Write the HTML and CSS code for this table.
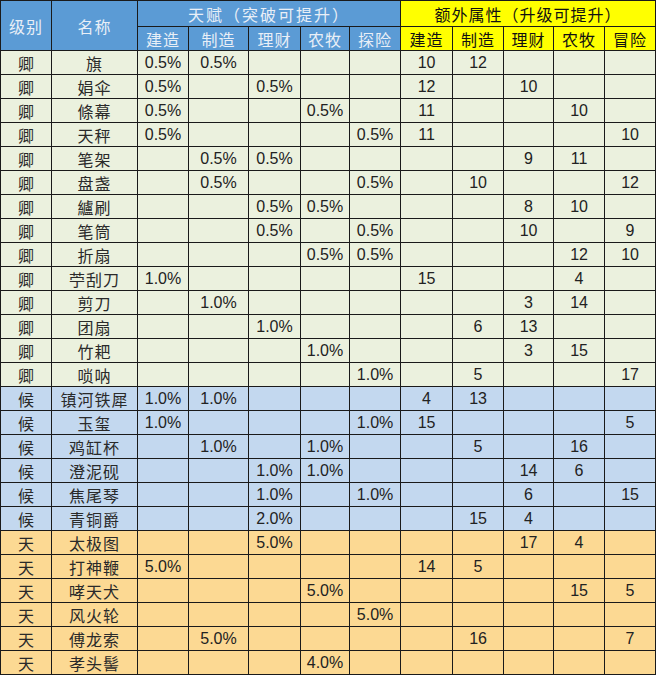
FILE: index.html
```html
<!DOCTYPE html>
<html lang="zh">
<head>
<meta charset="utf-8">
<title>法宝属性表</title>
<link rel="stylesheet" href="styles.css">
</head>
<body>
<table class="sheet">
  <colgroup>
    <col class="c-lv"><col class="c-name">
    <col class="c-a1"><col class="c-a2"><col class="c-a3"><col class="c-a4"><col class="c-a5">
    <col class="c-b1"><col class="c-b2"><col class="c-b3"><col class="c-b4"><col class="c-b5">
  </colgroup>
  <thead>
    <tr class="h1">
      <th class="blue" rowspan="2">级别</th>
      <th class="blue" rowspan="2">名称</th>
      <th class="blue wide" colspan="5">天赋（突破可提升）</th>
      <th class="yellow" colspan="5">额外属性（升级可提升）</th>
    </tr>
    <tr class="h2">
      <th class="blue">建造</th><th class="blue">制造</th><th class="blue">理财</th><th class="blue">农牧</th><th class="blue">探险</th>
      <th class="yellow">建造</th><th class="yellow">制造</th><th class="yellow">理财</th><th class="yellow">农牧</th><th class="yellow">冒险</th>
    </tr>
  </thead>
  <tbody>
    <tr class="qing"><td class="lv">卿</td><td class="nm">旗</td><td>0.5%</td><td>0.5%</td><td></td><td></td><td></td><td>10</td><td>12</td><td></td><td></td><td></td></tr>
    <tr class="qing"><td class="lv">卿</td><td class="nm">娟伞</td><td>0.5%</td><td></td><td>0.5%</td><td></td><td></td><td>12</td><td></td><td>10</td><td></td><td></td></tr>
    <tr class="qing"><td class="lv">卿</td><td class="nm">條幕</td><td>0.5%</td><td></td><td></td><td>0.5%</td><td></td><td>11</td><td></td><td></td><td>10</td><td></td></tr>
    <tr class="qing"><td class="lv">卿</td><td class="nm">天秤</td><td>0.5%</td><td></td><td></td><td></td><td>0.5%</td><td>11</td><td></td><td></td><td></td><td>10</td></tr>
    <tr class="qing"><td class="lv">卿</td><td class="nm">笔架</td><td></td><td>0.5%</td><td>0.5%</td><td></td><td></td><td></td><td></td><td>9</td><td>11</td><td></td></tr>
    <tr class="qing"><td class="lv">卿</td><td class="nm">盘盏</td><td></td><td>0.5%</td><td></td><td></td><td>0.5%</td><td></td><td>10</td><td></td><td></td><td>12</td></tr>
    <tr class="qing"><td class="lv">卿</td><td class="nm">纑刷</td><td></td><td></td><td>0.5%</td><td>0.5%</td><td></td><td></td><td></td><td>8</td><td>10</td><td></td></tr>
    <tr class="qing"><td class="lv">卿</td><td class="nm">笔筒</td><td></td><td></td><td>0.5%</td><td></td><td>0.5%</td><td></td><td></td><td>10</td><td></td><td>9</td></tr>
    <tr class="qing"><td class="lv">卿</td><td class="nm">折扇</td><td></td><td></td><td></td><td>0.5%</td><td>0.5%</td><td></td><td></td><td></td><td>12</td><td>10</td></tr>
    <tr class="qing"><td class="lv">卿</td><td class="nm">苧刮刀</td><td>1.0%</td><td></td><td></td><td></td><td></td><td>15</td><td></td><td></td><td>4</td><td></td></tr>
    <tr class="qing"><td class="lv">卿</td><td class="nm">剪刀</td><td></td><td>1.0%</td><td></td><td></td><td></td><td></td><td></td><td>3</td><td>14</td><td></td></tr>
    <tr class="qing"><td class="lv">卿</td><td class="nm">团扇</td><td></td><td></td><td>1.0%</td><td></td><td></td><td></td><td>6</td><td>13</td><td></td><td></td></tr>
    <tr class="qing"><td class="lv">卿</td><td class="nm">竹耙</td><td></td><td></td><td></td><td>1.0%</td><td></td><td></td><td></td><td>3</td><td>15</td><td></td></tr>
    <tr class="qing"><td class="lv">卿</td><td class="nm">唢呐</td><td></td><td></td><td></td><td></td><td>1.0%</td><td></td><td>5</td><td></td><td></td><td>17</td></tr>
    <tr class="hou"><td class="lv">候</td><td class="nm">镇河铁犀</td><td>1.0%</td><td>1.0%</td><td></td><td></td><td></td><td>4</td><td>13</td><td></td><td></td><td></td></tr>
    <tr class="hou"><td class="lv">候</td><td class="nm">玉玺</td><td>1.0%</td><td></td><td></td><td></td><td>1.0%</td><td>15</td><td></td><td></td><td></td><td>5</td></tr>
    <tr class="hou"><td class="lv">候</td><td class="nm">鸡缸杯</td><td></td><td>1.0%</td><td></td><td>1.0%</td><td></td><td></td><td>5</td><td></td><td>16</td><td></td></tr>
    <tr class="hou"><td class="lv">候</td><td class="nm">澄泥砚</td><td></td><td></td><td>1.0%</td><td>1.0%</td><td></td><td></td><td></td><td>14</td><td>6</td><td></td></tr>
    <tr class="hou"><td class="lv">候</td><td class="nm">焦尾琴</td><td></td><td></td><td>1.0%</td><td></td><td>1.0%</td><td></td><td></td><td>6</td><td></td><td>15</td></tr>
    <tr class="hou"><td class="lv">候</td><td class="nm">青铜爵</td><td></td><td></td><td>2.0%</td><td></td><td></td><td></td><td>15</td><td>4</td><td></td><td></td></tr>
    <tr class="tian"><td class="lv">天</td><td class="nm">太极图</td><td></td><td></td><td>5.0%</td><td></td><td></td><td></td><td></td><td>17</td><td>4</td><td></td></tr>
    <tr class="tian"><td class="lv">天</td><td class="nm">打神鞭</td><td>5.0%</td><td></td><td></td><td></td><td></td><td>14</td><td>5</td><td></td><td></td><td></td></tr>
    <tr class="tian"><td class="lv">天</td><td class="nm">哮天犬</td><td></td><td></td><td></td><td>5.0%</td><td></td><td></td><td></td><td></td><td>15</td><td>5</td></tr>
    <tr class="tian"><td class="lv">天</td><td class="nm">风火轮</td><td></td><td></td><td></td><td></td><td>5.0%</td><td></td><td></td><td></td><td></td><td></td></tr>
    <tr class="tian"><td class="lv">天</td><td class="nm">傅龙索</td><td></td><td>5.0%</td><td></td><td></td><td></td><td></td><td>16</td><td></td><td></td><td>7</td></tr>
    <tr class="tian"><td class="lv">天</td><td class="nm">孝头髻</td><td></td><td></td><td></td><td>4.0%</td><td></td><td></td><td></td><td></td><td></td><td></td></tr>
  </tbody>
</table>
</body>
</html>
```

FILE: styles.css
```css
html, body {
  margin: 0;
  padding: 0;
  background: #ffffff;
}

.sheet {
  border-collapse: collapse;
  table-layout: fixed;
  width: 655px;
  font-family: "Liberation Sans", "Noto Sans CJK SC", sans-serif;
  font-size: 16px;
  line-height: 18px;
  color: #222222;
}

.c-lv { width: 51px; }
.c-name { width: 86px; }
.c-a1 { width: 51px; }
.c-a2 { width: 60px; }
.c-a3 { width: 52px; }
.c-a4 { width: 49px; }
.c-a5 { width: 51px; }
.c-b1 { width: 52px; }
.c-b2 { width: 51px; }
.c-b3 { width: 50px; }
.c-b4 { width: 51px; }
.c-b5 { width: 51px; }

.sheet th,
.sheet td {
  border: 1px solid #1a1a1a;
  padding: 0;
  text-align: center;
  vertical-align: middle;
  white-space: nowrap;
  overflow: hidden;
}

.sheet th {
  font-family: "Noto Sans CJK SC", sans-serif;
  font-weight: 400;
  font-size: 16px;
  letter-spacing: 1px;
}

.sheet th.wide {
  letter-spacing: 2px;
}

.h1 { height: 26px; }
.h2 { height: 24px; }

.blue {
  background: #5b9bd5;
  color: #e9eff7;
  border-color: #2a3a4c;
}

.yellow {
  background: #ffff00;
  color: #111111;
  font-weight: 700;
}

.sheet tbody tr {
  height: 24px;
}

.sheet td.lv,
.sheet td.nm {
  font-family: "Noto Sans CJK SC", sans-serif;
  font-size: 16px;
  color: #2a2a2a;
}

.sheet td.nm {
  letter-spacing: 1px;
}

.qing td { background: #ebf1de; }
.hou td { background: #c3d8ef; }
.tian td { background: #fcd993; }
```
